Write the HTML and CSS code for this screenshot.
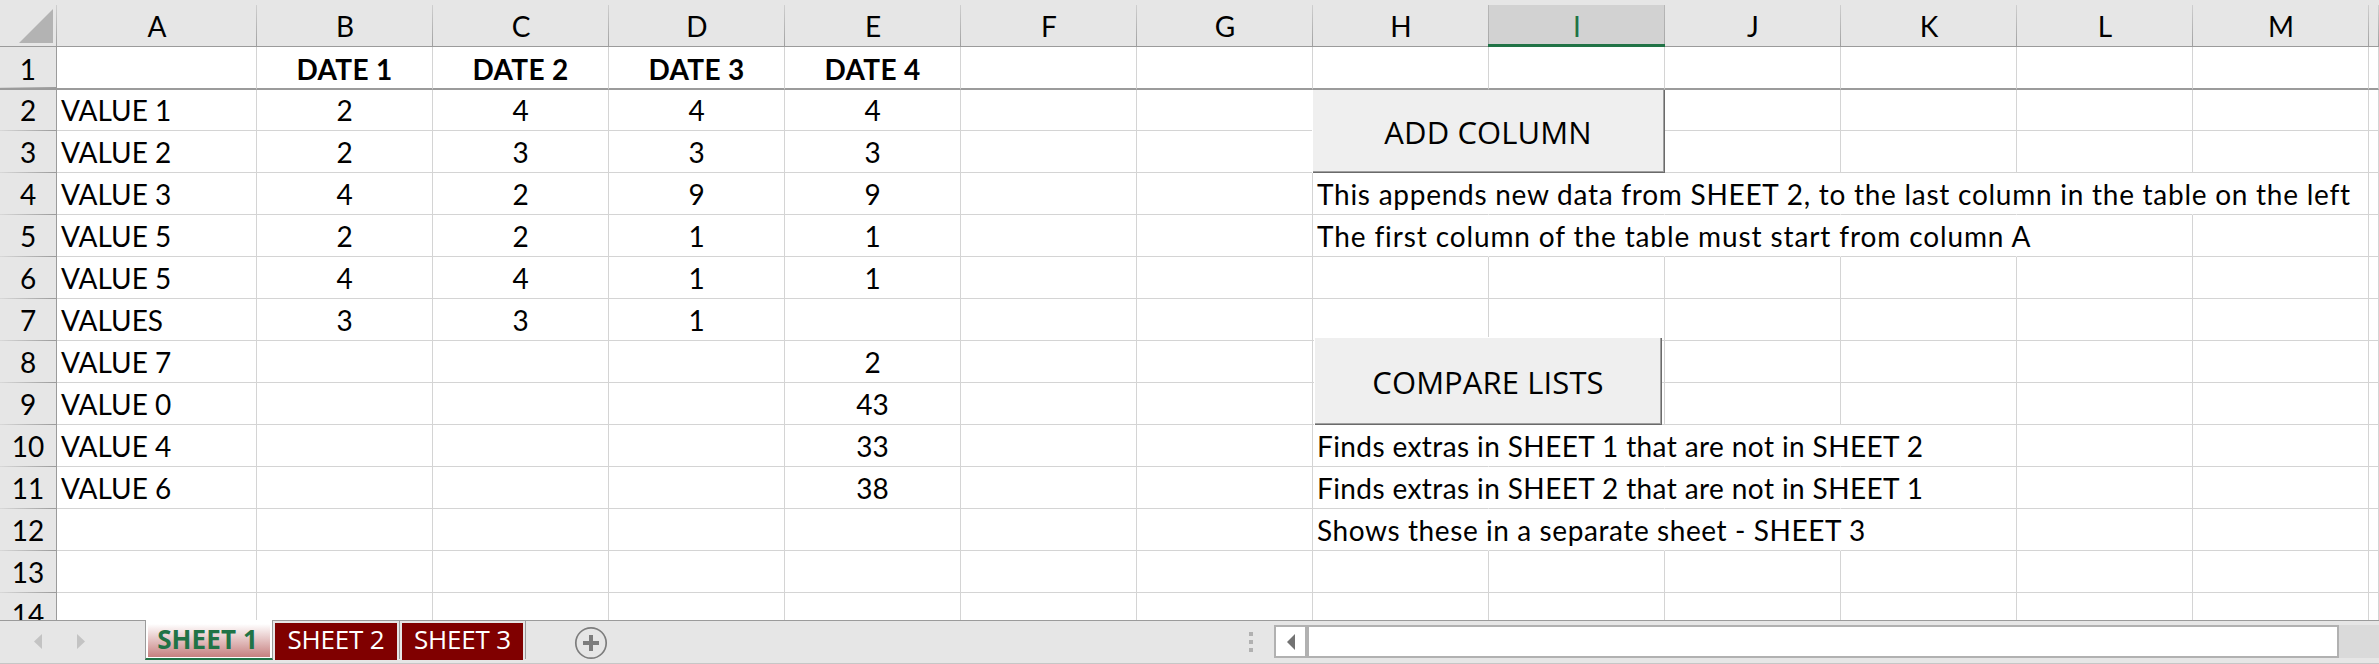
FILE: index.html
```html
<!DOCTYPE html>
<html lang="en">
<head>
<meta charset="utf-8">
<title>Workbook</title>
<link rel="stylesheet" href="styles.css">
</head>
<body>
<main class="workbook">
<div class="sheet" id="sheet"></div>
<button class="macro add">ADD COLUMN</button>
<button class="macro compare">COMPARE LISTS</button>
<footer class="bar">
  <svg class="nav" width="60" height="20" viewBox="0 0 60 20"><path d="M9 2v15L1 9.500zM44 2v15l8-7.500z" fill="#c3c3c3"/></svg>
  <div class="tab active"><span>SHEET 1</span></div>
  <div class="tab"><span>SHEET 2</span></div>
  <div class="tab last"><span>SHEET 3</span></div>
  <svg class="plus" width="34" height="34" viewBox="0 0 34 34"><circle cx="17" cy="17" r="15.200" fill="none" stroke="#7d7d7d" stroke-width="1.700"/><path d="M17 9v16M9 17h16" stroke="#7d7d7d" stroke-width="4"/></svg>
  <div class="dots"><i></i><i></i><i></i></div>
  <div class="scroll"><div class="prev"><svg width="8" height="16" viewBox="0 0 8 16"><path d="M8 0v16L0 8z" fill="#737373"/></svg></div><div class="thumb"></div></div>
  <div class="track"></div>
</footer>
</main>
<script src="sheet.js"></script>
</body>
</html>
```
FILE: styles.css
```css
* { box-sizing: border-box; }
body { margin: 0; background: #fff; color: #000; font-family: Lato, "Open Sans", sans-serif; }
.workbook { position: relative; width: 2379px; height: 664px; overflow: hidden; display: flex; flex-direction: column; }
.sheet { height: 620px; overflow: hidden; flex: none; }
.row { display: grid; grid-template-columns: 57px 200px repeat(12, 176px) 10px; grid-template-rows: 100%; height: 42px; }
.row.head { height: 47px; background: #e6e6e6; }
.cell { border-right: 1px solid #d4d4d4; border-bottom: 1px solid #d4d4d4; font-size: 28px; line-height: 43px; text-align: center; white-space: nowrap; min-width: 0; font-variant-ligatures: none; }
.cell.first { text-align: left; padding-left: 4px; }
.cell.note { text-align: left; padding-left: 4px; }
.note-4 { letter-spacing: .74px; }
.note-5 { letter-spacing: .88px; }
.note-10, .note-11 { letter-spacing: .4px; }
.note-12 { letter-spacing: .59px; }
.cell.open { border-right-color: transparent; }
.cell.rownum { border-right-color: #9b9b9b; border-bottom: 0; background: linear-gradient(90deg, #d8d8d8, #9b9b9b) bottom / 100% 1px no-repeat #e6e6e6; }
.row.second { height: 41px; }
.row.second .cell { line-height: 41px; }
.row.frozen { height: 43px; }
.row.frozen .cell { border-bottom: 2px solid #9b9b9b; font-weight: 700; line-height: 44px; letter-spacing: .35px; }
.row.frozen .rownum { font-weight: 400; }
.head .cell { border-right: 0; border-bottom: 1px solid #9b9b9b; line-height: 53px; background: linear-gradient(#cfcfcf, #9b9b9b) right 5px / 1px 100% no-repeat; }
.head .cell.selected { margin-left: -1px; padding-left: 1px; color: #217346; border-bottom: 3px solid #217346; background: linear-gradient(#b8b8b8, #a6a6a6) right 5px / 1px 100% no-repeat, linear-gradient(#b8b8b8, #a6a6a6) left 5px / 1px 100% no-repeat, linear-gradient(#d2d2d2, #d2d2d2) 0 5px / 100% 100% no-repeat; }
.head .corner { display: flex; justify-content: flex-end; padding: 9px 4px 0 0; }
.macro { position: absolute; margin: 0; padding: 0; border: 0 solid #fff; border-left-width: 1px; background: #efefef; color: #000; font-family: "Open Sans", sans-serif; font-size: 31px; letter-spacing: .1px; }
.add { left: 1312px; top: 90px; width: 353px; height: 83px; padding-right: 2px; box-shadow: inset -1px -1px #6a6a6a, inset -2px -2px #a0a0a0; }
.compare { left: 1314px; top: 337px; width: 348px; height: 88px; padding-right: 1px; border-top-width: 1px; box-shadow: inset -1px -1px #6a6a6a, inset -2px -2px #a0a0a0; }
.bar { height: 44px; flex: none; display: flex; background: #e6e6e6; border-top: 1px solid #9b9b9b; border-bottom: 1px solid #c6c6c6; font-family: "Open Sans", sans-serif; font-size: 26px; }
.nav { margin: 11px 52px 0 33px; flex: none; }
.tab { width: 127px; height: 38px; padding: 2px 0 0 2px; border-right: 1px solid #9b9b9b; color: #fff; flex: none; }
.tab.last { width: 126px; }
.tab span { display: block; width: 122px; height: 37px; background: #800000; text-align: center; line-height: 32px; white-space: nowrap; letter-spacing: -.2px; }
.tab.last span { width: 121px; }
.tab.active { width: 128px; height: 40px; margin-top: -1px; padding: 4px 2px 0; background: #fff; border: 1px solid #9b9b9b; border-width: 0 1px; border-bottom: 2px solid #217346; }
.tab.active span { width: 122px; height: 33px; padding-right: 3px; background: linear-gradient(#fff, #c78080); color: #217346; font-weight: 700; letter-spacing: .1px; line-height: 31px; }
.plus { margin: 5px 0 0 48px; flex: none; }
.dots { margin: 11px 21px 0 641px; display: grid; gap: 4px; align-content: start; flex: none; }
.dots i { width: 4px; height: 4px; background: #b1b1b1; }
.scroll { width: 1065px; height: 33px; margin-top: 4px; border: 2px solid #b1b1b1; background: #fff; display: flex; flex: none; }
.prev { width: 33px; border-right: 4px solid #b1b1b1; display: flex; align-items: center; justify-content: center; }
.thumb { flex: 1; background: #fff; }
.track { flex: 1; height: 33px; margin-top: 4px; background: #dadada; }
```
FILE: sheet.js
```js
const sheet = document.getElementById('sheet');
const rows = [
  ['', 'DATE 1', 'DATE 2', 'DATE 3', 'DATE 4'],
  ['VALUE 1', 2, 4, 4, 4], ['VALUE 2', 2, 3, 3, 3], ['VALUE 3', 4, 2, 9, 9],
  ['VALUE 5', 2, 2, 1, 1], ['VALUE 5', 4, 4, 1, 1], ['VALUES', 3, 3, 1, ''],
  ['VALUE 7', '', '', '', 2], ['VALUE 0', '', '', '', 43],
  ['VALUE 4', '', '', '', 33], ['VALUE 6', '', '', '', 38], [], [], []
];
// Each note: text and the number of columns it spills across.
const notes = {
  4: ['This appends new data from SHEET 2, to the last column in the table on the left', 6],
  5: ['The first column of the table must start from column A', 5],
  10: ['Finds extras in SHEET 1 that are not in SHEET 2', 4],
  11: ['Finds extras in SHEET 2 that are not in SHEET 1', 4],
  12: ['Shows these in a separate sheet - SHEET 3', 4]
};
const rowClass = { 1: ' frozen', 2: ' second' };
let html = '<div class="row head"><div class="cell corner"><svg width="34" height="34" viewBox="0 0 34 34"><path d="M34 0v34H0z" fill="#b3b3b3"/></svg></div>';
for (const c of 'ABCDEFGHIJKLM') html += `<div class="cell${c === 'I' ? ' selected' : ''}">${c}</div>`;
html += '<div class="cell"></div></div>';
rows.forEach((r, i) => {
  const n = i + 1, note = notes[n];
  html += `<div class="row${rowClass[n] ?? ''}"><div class="cell rownum">${n}</div>`;
  for (let c = 0; c < 14; c++) {
    let cls = c === 0 ? ' first' : '', text = r[c] ?? '';
    if (note && c === 7) { cls += ` note note-${n}`; text = note[0]; }
    if (note && c >= 7 && c < 6 + note[1]) cls += ' open';
    html += `<div class="cell${cls}">${text}</div>`;
  }
  html += '</div>';
});
sheet.innerHTML = html;
```
